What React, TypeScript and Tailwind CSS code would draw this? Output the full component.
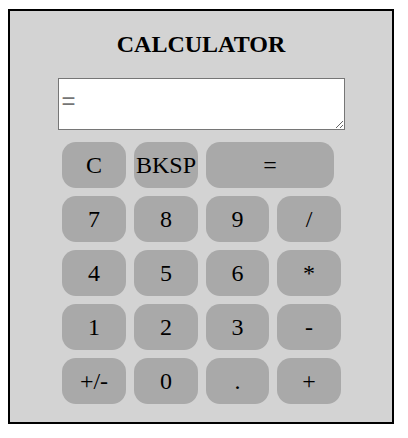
import React from "react";

const btn =
  "h-[46px] rounded-[14px] bg-[#a9a9a9] text-[24px] leading-none text-black flex items-center justify-center whitespace-nowrap";

export default function App() {
  const keys = ["7", "8", "9", "/", "4", "5", "6", "*", "1", "2", "3", "-", "+/-", "0", ".", "+"];

  return (
    <div className="w-[408px] h-[438px] bg-white pt-[9px] pl-2 font-['Liberation_Serif',serif]">
      <div className="w-[386px] h-[415px] border-2 border-black bg-[#d3d3d3] pt-[19px] flex flex-col items-center">
        {/* Title */}
        <h1 className="text-[24px] leading-[28px] font-bold text-black">CALCULATOR</h1>

        {/* Display */}
        <textarea
          placeholder="="
          className="mt-[20px] block w-[287px] h-[52px] bg-white border border-[#767676] pl-[3px] pt-[8px] font-['Liberation_Sans',Arial,sans-serif] text-[24px] leading-[28px] text-black placeholder:text-[#757575] outline-none"
        />

        {/* Keypad */}
        <div className="mt-[12px] ml-px grid grid-cols-[64px_64px_63px_64px] gap-x-2 gap-y-2">
          <button className={btn}>C</button>
          <button className={btn}>BKSP</button>
          <button className={`${btn} col-span-2 w-[128px]`}>=</button>
          {keys.map((k) => (
            <button key={k} className={btn}>
              {k}
            </button>
          ))}
        </div>
      </div>
    </div>
  );
}
